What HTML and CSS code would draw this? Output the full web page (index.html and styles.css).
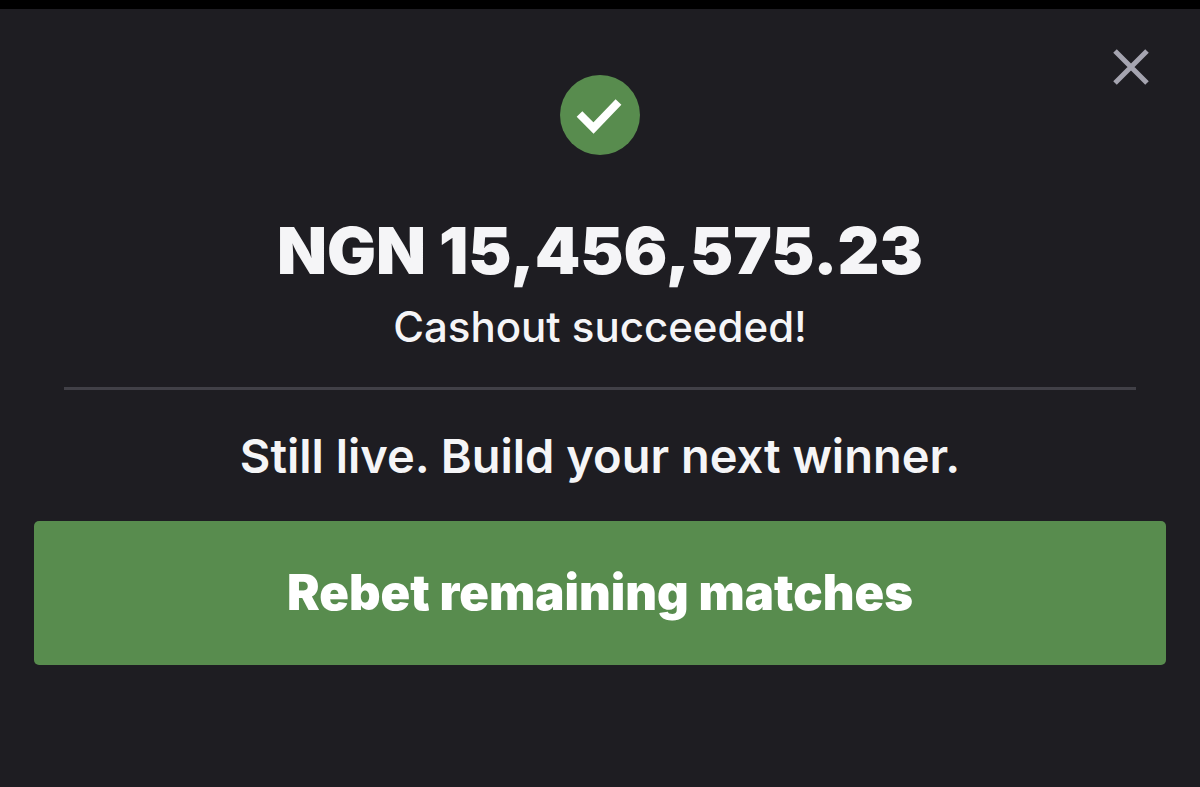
FILE: index.html
```
<!DOCTYPE html>
<html lang="en">
<head>
    <meta charset="UTF-8">
    <meta name="viewport" content="width=device-width, initial-scale=1">
    <title>Cashout</title>
    <link rel="stylesheet" href="styles.css">
</head>
<body>
    <main class="cashout">
        <button class="close" type="button" aria-label="Close">
            <svg width="36" height="36" viewBox="0 0 36 36"><path d="M2 2L34 34M34 2L2 34"/></svg>
        </button>
        <svg class="success" width="80" height="80" viewBox="0 0 80 80" aria-hidden="true">
            <circle cx="40" cy="40" r="40"/>
            <path d="M19.500 39L33.500 53L58.500 27"/>
        </svg>
        <h1 class="amount">NGN 15,456,575.23</h1>
        <p class="status">Cashout succeeded!</p>
        <hr class="divider">
        <p class="message">Still live. Build your next winner.</p>
        <button class="rebet" type="button">Rebet remaining matches</button>
    </main>
</body>
</html>
```
FILE: styles.css
```
* {
    box-sizing: border-box;
}
body {
    margin: 0;
    background: #1e1d22;
    color: #f5f5f7;
    font-family: Inter, Arial, sans-serif;
}
.cashout {
    position: relative;
    display: flex;
    flex-direction: column;
    align-items: center;
    min-height: 100vh;
    padding: 66px 34px 64px;
    border-top: 9px solid #000;
}
.close {
    position: absolute;
    top: 40px;
    right: 51px;
    padding: 0;
    border: 0;
    background: none;
    line-height: 0;
    cursor: pointer;
}
.close path {
    fill: none;
    stroke: #a5a4b0;
    stroke-width: 5;
}
.success circle {
    fill: #588c4e;
}
.success path {
    fill: none;
    stroke: #fff;
    stroke-width: 8;
}
.amount {
    margin: 60px 0 0;
    font-size: 65px;
    line-height: 72px;
    font-weight: 900;
    text-align: center;
}
.status {
    margin: 16px 0 0;
    font-size: 42px;
    line-height: 48px;
    font-weight: 500;
    text-align: center;
}
.divider {
    width: calc(100% - 60px);
    height: 3px;
    margin: 36px 0;
    border: 0;
    background: #414047;
}
.message {
    margin: 0;
    font-size: 47px;
    line-height: 60px;
    font-weight: 600;
    text-align: center;
}
.rebet {
    width: 100%;
    margin-top: 35px;
    padding: 42px 24px;
    border: 0;
    border-radius: 5px;
    background: #588c4e;
    color: #fff;
    font-family: inherit;
    font-size: 49px;
    line-height: 60px;
    font-weight: 900;
    cursor: pointer;
}
```
